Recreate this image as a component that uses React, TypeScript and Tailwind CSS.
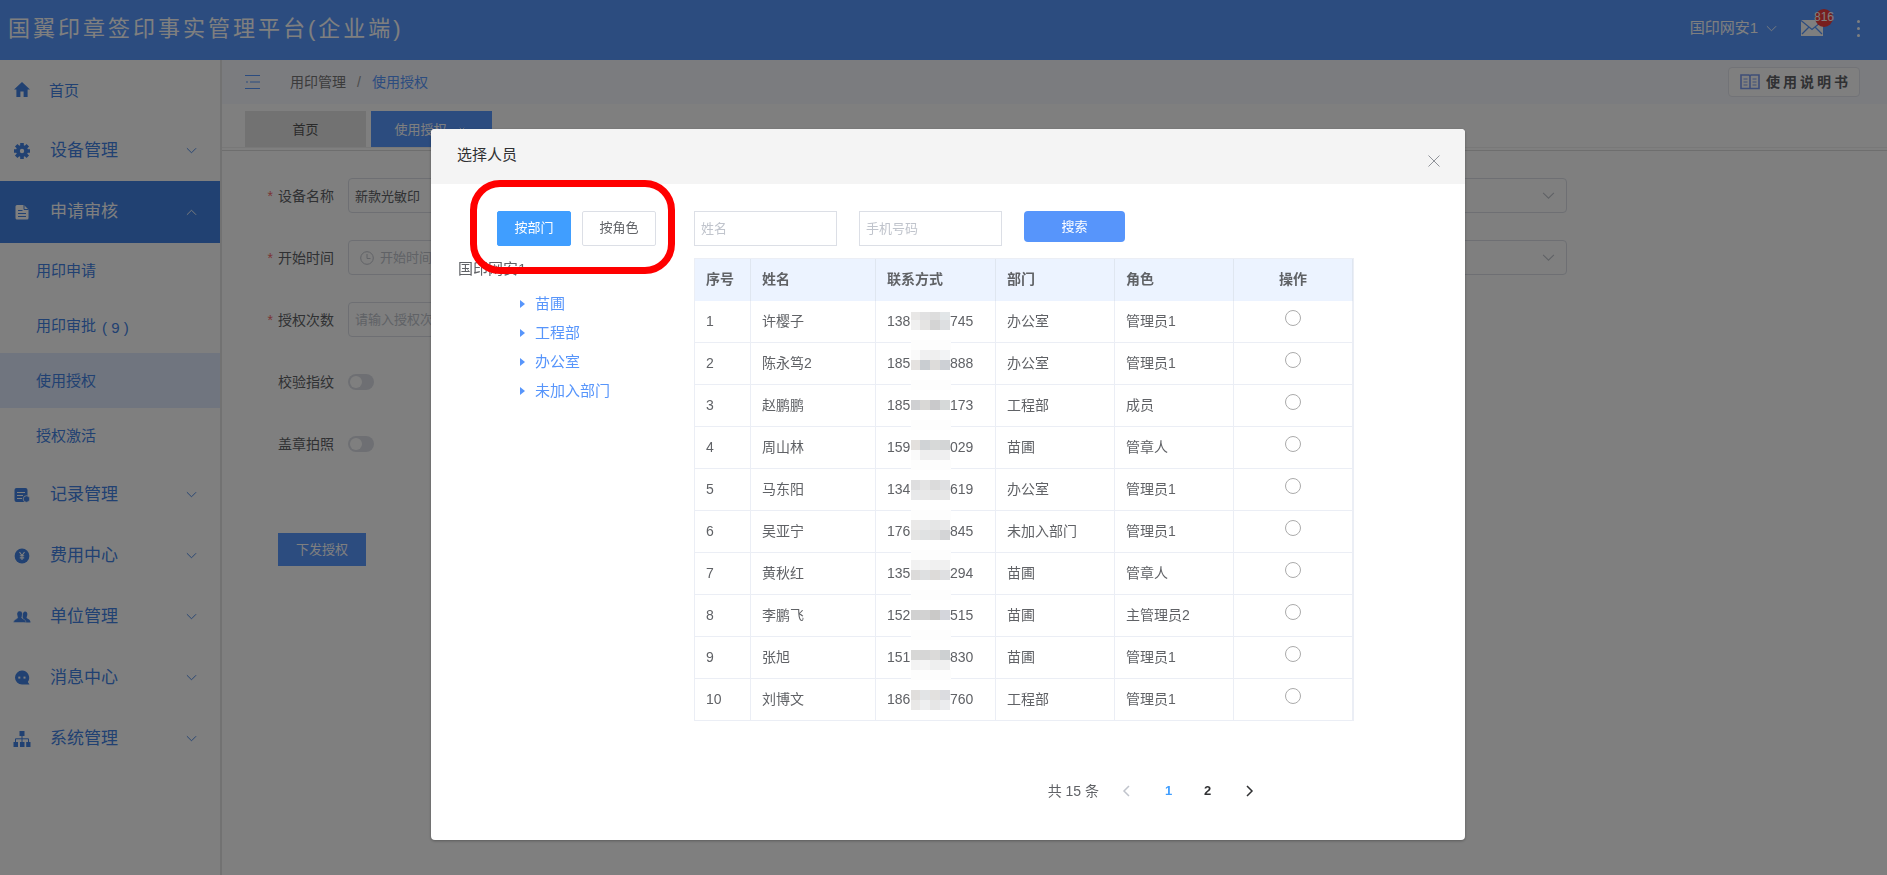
import { useState } from 'react'
import type { ReactNode } from 'react'

const ICONS: Record<string, ReactNode> = {
  home: <path d="M9 1 17 8.6H14.6V16H10.6V10.6H7.4V16H3.4V8.6H1Z" />,
  gear: (
    <g>
      <g stroke="currentColor" strokeWidth="3.6">
        <path d="M9 1V17M1 9H17M3.2 3.2 14.8 14.8M14.8 3.2 3.2 14.8" />
      </g>
      <circle cx="9" cy="9" r="6" />
      <circle cx="9" cy="9" r="2.2" fill="#fff" />
    </g>
  ),
  doc: (
    <g>
      <path d="M4 2H11L15.5 6.5V15A1.5 1.5 0 0 1 14 16.500H4A1.500 1.500 0 0 1 2.500 15V3.500A1.500 1.500 0 0 1 4 2Z" />
      <path d="M11 2V6.500H15.500M5 7.500H9.500M5 10.500H13M5 13.500H13" stroke="#4282e4" fill="none" />
    </g>
  ),
  record: (
    <g>
      <rect x="1.500" y="2" width="13" height="14" rx="2" />
      <path d="M4 6.500H12M4 9.500H10M4 12.500H9" stroke="#fff" strokeWidth="1.200" />
      <circle cx="13.500" cy="13" r="3.300" stroke="#fff" strokeWidth="0.800" />
    </g>
  ),
  fee: (
    <g>
      <circle cx="9" cy="9" r="7.400" />
      <path d="M6.500 5 9 8.500 11.500 5M9 8.500V13M6.800 8.800H11.200M6.800 10.900H11.200" stroke="#fff" fill="none" strokeWidth="1.100" />
    </g>
  ),
  people: (
    <g>
      <path d="M12 3.500C13.800 3.500 14.600 5 14.300 6.800 14.100 8.200 13.600 8.900 13.600 9.800 14.200 11 17.500 11.200 17.500 14.500H11.500L9.500 9C9.900 7.500 9.700 3.500 12 3.500Z" />
      <path
        d="M6.700 3C9 3 9.700 4.800 9.400 6.800 9.200 8.200 8.700 8.900 8.700 9.800 9.400 11.200 13 11.200 13 14.500H.5C.5 11.200 4.100 11.200 4.700 9.800 4.700 8.900 4.200 8.200 4 6.800 3.700 4.800 4.500 3 6.700 3Z"
        stroke="#fff"
        strokeWidth="0.500"
      />
    </g>
  ),
  chat: (
    <g>
      <path d="M9 1.600A7.200 7.200 0 0 1 14.800 13L16.500 15.600H9A7 7 0 0 1 9 1.600Z" />
      <rect x="5.300" y="7.600" width="2" height="2" fill="#fff" />
      <rect x="10.500" y="7.600" width="2" height="2" fill="#fff" />
    </g>
  ),
  tree: (
    <g>
      <path d="M6.500 1H11.500V6H6.500ZM.5 12H5V17H.5ZM7 12H11.500V17H7ZM13.200 12H17.500V17H13.200Z" />
      <path d="M9 6V12M2.500 12V8.800H15.500V12" stroke="currentColor" fill="none" />
    </g>
  ),
}

const SUB_MENU = [
  { label: '用印申请' },
  { label: '用印审批', count: '( 9 )' },
  { label: '使用授权', active: true },
  { label: '授权激活' },
]

const MENU_BOTTOM = [
  { icon: 'record', label: '记录管理' },
  { icon: 'fee', label: '费用中心' },
  { icon: 'people', label: '单位管理' },
  { icon: 'chat', label: '消息中心' },
  { icon: 'tree', label: '系统管理' },
]

const DEPARTMENTS = ['苗圃', '工程部', '办公室', '未加入部门']

const PEOPLE = [
  { name: '许樱子', phone: ['138', '745'], dept: '办公室', role: '管理员1' },
  { name: '陈永笃2', phone: ['185', '888'], dept: '办公室', role: '管理员1' },
  { name: '赵鹏鹏', phone: ['185', '173'], dept: '工程部', role: '成员' },
  { name: '周山林', phone: ['159', '029'], dept: '苗圃', role: '管章人' },
  { name: '马东阳', phone: ['134', '619'], dept: '办公室', role: '管理员1' },
  { name: '吴亚宁', phone: ['176', '845'], dept: '未加入部门', role: '管理员1' },
  { name: '黄秋红', phone: ['135', '294'], dept: '苗圃', role: '管章人' },
  { name: '李鹏飞', phone: ['152', '515'], dept: '苗圃', role: '主管理员2' },
  { name: '张旭', phone: ['151', '830'], dept: '苗圃', role: '管理员1' },
  { name: '刘博文', phone: ['186', '760'], dept: '工程部', role: '管理员1' },
]

// y of each strip followed by its four cell colours
const MASK: [number, string, string, string, string][] = [
  [12, '#e8e7e6', '#e1e1e2', '#dddddd', '#e2e6e8'],
  [20, '#f0f0f0', '#e5e4e3', '#d4d4d4', '#dddfe1'],
  [50, '#fafafa', '#f0f0f1', '#efefef', '#f2f3f5'],
  [60, '#e5e2e0', '#c9cdd1', '#dddcda', '#cdd0d5'],
  [100, '#cfd0d2', '#d9d8d6', '#c9c9cb', '#d6d9d9'],
  [140, '#e3e0dd', '#d0d3d6', '#d7d9d8', '#d3d5d6'],
  [150, '#fafafa', '#eeeeee', '#eeeeef', '#efeff0'],
  [180, '#dededf', '#e4e4e4', '#dbdbdb', '#dfe0e2'],
  [190, '#e8e9ea', '#e8e8e8', '#e6e6e6', '#e7e7e7'],
  [220, '#eae9e8', '#e8e9ea', '#e5e6e6', '#e8e8e9'],
  [230, '#e4e4e3', '#e0e2e3', '#e0e0e0', '#d3d4d6'],
  [260, '#f1f1f1', '#f3f3f3', '#f0f0f0', '#f0f0f0'],
  [270, '#dcdbda', '#dee0e1', '#dddbd9', '#dfe0e2'],
  [310, '#d1d1d1', '#d2d2d2', '#cac9c8', '#d4d6dc'],
  [350, '#d7d7d6', '#d6d6d6', '#dbdad9', '#cdd0d2'],
  [360, '#f3f3f3', '#f5f5f5', '#eeefef', '#f0f0f0'],
  [390, '#e0dedc', '#e2e4e6', '#e3e1df', '#dbdce0'],
  [400, '#e9e8e7', '#eeeff0', '#e6e6e6', '#ebecee'],
]
const MASK_GAPS = [40, 80, 120, 160, 210, 250, 290, 330, 370]

function MenuIcon({ name }: { name: string }) {
  return (
    <svg viewBox="0 0 18 18" className="size-[18px] shrink-0" fill="currentColor">
      {ICONS[name]}
    </svg>
  )
}

function Chevron({ className, up }: { className: string; up?: boolean }) {
  return (
    <svg viewBox="0 0 12 12" className={className} fill="none" stroke="currentColor">
      <path d={up ? 'M1 8.500 6 3.500 11 8.500' : 'M1 3.500 6 8.500 11 3.500'} />
    </svg>
  )
}

function MenuItem({ icon, label }: { icon: string; label: string }) {
  return (
    <a href="#" className="flex h-[61px] items-center pr-[23px] pl-[13px]">
      <MenuIcon name={icon} />
      <span className="ml-[19px] flex-1 text-[17px]">{label}</span>
      <Chevron className="size-[11px]" />
    </a>
  )
}

function Header() {
  return (
    <header className="flex h-[60px] items-center bg-[#5898ff] pr-[26px] pb-1 pl-2 text-white">
      <h1 className="flex-1 text-[22px] tracking-[3px]">国翼印章签印事实管理平台(企业端)</h1>
      <button className="flex items-center gap-2 text-[15px]">
        国印网安1
        <Chevron className="size-[11px]" />
      </button>
      <button className="relative ml-6" aria-label="消息">
        <svg viewBox="0 0 22 16" className="h-4 w-[22px]">
          <path d="M0 0H22V16H0Z" fill="#fff" />
          <path d="M0 .5 11 9.500 22 .5M1 14 8 7M21 14 14 7" fill="none" stroke="#5898ff" strokeWidth="1.300" />
        </svg>
        <span className="absolute -top-[11px] left-[14px] flex size-[18px] items-center justify-center rounded-full bg-[#f03c3c] pb-0.5 text-xs font-medium">
          816
        </span>
      </button>
      <button className="ml-[33px] flex flex-col gap-1 px-px" aria-label="更多">
        <span className="size-[3px] rounded-full bg-white" />
        <span className="size-[3px] rounded-full bg-white" />
        <span className="size-[3px] rounded-full bg-white" />
      </button>
    </header>
  )
}

function Sidebar() {
  return (
    <nav className="w-[220px] shrink-0 text-[#4282e4]">
      <a href="#" className="flex h-[60px] items-center pl-[13px]">
        <MenuIcon name="home" />
        <span className="ml-[18px] pt-0.5 text-[15px]">首页</span>
      </a>
      <MenuItem icon="gear" label="设备管理" />
      <a href="#" className="flex h-[62px] items-center bg-[#4282e4] pr-[23px] pl-[13px] text-white">
        <MenuIcon name="doc" />
        <span className="ml-[19px] flex-1 text-[17px]">申请审核</span>
        <Chevron className="size-[11px]" up />
      </a>
      {SUB_MENU.map((item) => (
        <a
          key={item.label}
          href="#"
          className={`flex h-[55px] items-center gap-1 pt-0.5 pl-9 text-[15px] ${item.active ? 'bg-[#e0eafe]' : ''}`}
        >
          {item.label}
          {item.count && <span className="pt-1 pl-0.5">{item.count}</span>}
        </a>
      ))}
      <div className="pt-px">
        {MENU_BOTTOM.map((item) => (
          <MenuItem key={item.icon} icon={item.icon} label={item.label} />
        ))}
      </div>
    </nav>
  )
}

function FormLabel({ htmlFor, text, required }: { htmlFor: string; text: string; required?: boolean }) {
  return (
    <label htmlFor={htmlFor} className="w-[112px] shrink-0 text-right text-sm text-[#606266]">
      {required && <span className="mr-[5px] text-[#f56c6c]">*</span>}
      {text}
    </label>
  )
}

function Toggle({ id, text }: { id: string; text: string }) {
  return (
    <div className="flex h-[35px] items-center gap-[14px]">
      <FormLabel htmlFor={id} text={text} />
      <span className="relative flex h-4 w-[26px]">
        <input id={id} type="checkbox" className="h-4 w-[26px] appearance-none rounded-full bg-[#dcdfe6]" />
        <span className="pointer-events-none absolute top-0.5 left-0.5 size-3 rounded-full bg-white" />
      </span>
    </div>
  )
}

function SelectBox({ label, value }: { label: string; value: string }) {
  return (
    <div className="relative min-w-0 flex-1">
      <select
        aria-label={label}
        className="block h-[35px] w-full appearance-none rounded border border-[#dcdfe6] px-1.5 text-[13px] text-[#606266]"
      >
        <option>{value}</option>
      </select>
      <Chevron className="pointer-events-none absolute top-[11px] right-3 size-[13px] text-[#c0c4cc]" />
    </div>
  )
}

function AuthForm() {
  return (
    <form className="flex w-[1345px] flex-col items-start gap-[27px] pt-[27px]">
      <div className="flex w-full items-center gap-[14px]">
        <FormLabel htmlFor="device" text="设备名称" required />
        <input
          id="device"
          defaultValue="新款光敏印"
          className="h-[35px] min-w-0 flex-1 rounded border border-[#dcdfe6] px-1.5 text-[13px] text-[#606266]"
        />
        <div className="w-28" />
        <SelectBox label="使用人员" value="" />
      </div>
      <div className="flex w-full items-center gap-[14px]">
        <FormLabel htmlFor="start" text="开始时间" required />
        <div className="flex h-[35px] min-w-0 flex-1 items-center rounded border border-[#dcdfe6] pl-[11px] text-[#c0c4cc]">
          <svg viewBox="0 0 14 14" className="size-[14px]" fill="none" stroke="currentColor">
            <circle cx="7" cy="7" r="6.300" />
            <path d="M7 3V7.500H10.500" />
          </svg>
          <input
            id="start"
            placeholder="开始时间"
            className="ml-1.5 min-w-0 flex-1 text-[13px] outline-none placeholder:text-[#c0c4cc]"
          />
        </div>
        <div className="w-28" />
        <SelectBox label="结束时间" value="" />
      </div>
      <div className="flex w-full items-center gap-[14px]">
        <FormLabel htmlFor="times" text="授权次数" required />
        <input
          id="times"
          placeholder="请输入授权次数"
          className="h-[35px] min-w-0 flex-1 rounded border border-[#dcdfe6] px-1.5 text-[13px] placeholder:text-[#c0c4cc]"
        />
        <div className="w-28" />
        <div className="flex-1" />
      </div>
      <Toggle id="fingerprint" text="校验指纹" />
      <Toggle id="photo" text="盖章拍照" />
      <button type="button" className="mt-[45px] ml-14 h-[33px] w-[88px] bg-[#5898ff] text-[13px] text-white">
        下发授权
      </button>
    </form>
  )
}

function Main() {
  return (
    <main className="min-w-0 flex-1 border-l-2 border-[#e4e4e4]">
      <div className="flex h-11 items-center bg-[#f6f8ff] pr-[27px] pl-[23px]">
        <button aria-label="收起菜单" className="text-[#5898ff]">
          <svg viewBox="0 0 15 14" className="h-[14px] w-[15px]" fill="none" stroke="currentColor">
            <path d="M0 .5H15M5 7H15M0 13.500H15M1 7H3" strokeWidth="1.200" />
          </svg>
        </button>
        <div className="ml-[30px] flex flex-1 items-center gap-[11px] text-sm">
          <a href="#" className="text-[#777]">用印管理</a>
          <span className="text-[#999]">/</span>
          <a href="#" className="text-[#5898ff]">使用授权</a>
        </div>
        <button className="flex h-[30px] items-center gap-1.5 rounded border border-[#e4e6ee] bg-white pr-2 pl-[11px] text-sm font-bold tracking-[3px] text-[#606266]">
          <svg viewBox="0 0 20 16" className="h-4 w-5" fill="none" stroke="#7c9cf0">
            <path d="M1 1H9L10 2 11 1H19V14.500H1ZM10 2V14.500" strokeWidth="1.600" />
            <path d="M3.500 5H7.500M3.500 8H7.500M3.500 11H7.500M12.500 5H16.500M12.500 8H16.500M12.500 11H16.500" />
          </svg>
          使用说明书
        </button>
      </div>
      <div className="flex h-11 items-end gap-[5px] border-b border-[#f0f0f0] pl-[23px]">
        <a href="#" className="flex h-9 w-[121px] items-center justify-center bg-[#e4e4e4] pt-0.5 text-[13px] text-[#555]">
          首页
        </a>
        <a href="#" className="flex h-9 w-[121px] items-center justify-center gap-3 bg-[#5898ff] pt-0.5 pr-1 text-[13px] text-white">
          使用授权
          <svg viewBox="0 0 8 8" className="size-1.5" fill="none" stroke="currentColor">
            <path d="M1 1 7 7M7 1 1 7" />
          </svg>
        </a>
      </div>
      <div className="mt-0.5 border-t border-[#dcdcdc]">
        <AuthForm />
      </div>
    </main>
  )
}

function PhoneMask() {
  const xs = [0, 9, 19, 29]
  return (
    <svg
      viewBox="0 0 40 420"
      className="pointer-events-none absolute top-[41px] left-[216px] h-[420px] w-10"
      shapeRendering="crispEdges"
    >
      {MASK_GAPS.map((y) => (
        <rect key={y} x="0" y={y} width="40" height="10" fill="#fdfdfd" />
      ))}
      {MASK.map(([y, ...colors]) =>
        colors.map((color, i) => (
          <rect key={`${y}-${i}`} x={xs[i]} y={y} width={i ? 10 : 9} height={y === 12 ? 8 : 10} fill={color} />
        )),
      )}
    </svg>
  )
}

function PeopleTable() {
  const [picked, setPicked] = useState('')

  return (
    <div className="relative mt-3 w-[660px] border border-[#ebeef5]">
      <table className="w-full table-fixed border-separate border-spacing-0 text-left text-sm text-[#606266]">
        <colgroup>
          <col className="w-14" />
          <col className="w-[125px]" />
          <col className="w-[120px]" />
          <col className="w-[119px]" />
          <col className="w-[119px]" />
          <col />
        </colgroup>
        <thead>
          <tr className="h-[42px]">
            {['序号', '姓名', '联系方式', '部门', '角色', '操作'].map((title) => (
              <th
                key={title}
                className={`border-r border-[#dfe6f0] bg-[#ecf3ff] px-[11px] pt-0 pb-0.5 font-bold ${title === '操作' ? 'text-center' : ''}`}
              >
                {title}
              </th>
            ))}
          </tr>
        </thead>
        <tbody>
          {PEOPLE.map((person, i) => (
            <tr
              key={person.name}
              className="h-[42px] *:border-r *:border-b *:border-[#ebeef5] *:px-[11px] *:pt-0 *:pb-0.5 last:h-[41px] last:*:border-b-0"
            >
              <td>{i + 1}</td>
              <td>{person.name}</td>
              <td>
                <span className="flex gap-[39px]">
                  <span className="w-6">{person.phone[0]}</span>
                  <span>{person.phone[1]}</span>
                </span>
              </td>
              <td>{person.dept}</td>
              <td>{person.role}</td>
              <td className="text-center">
                <input
                  type="radio"
                  name="person"
                  aria-label={person.name}
                  checked={picked === person.name}
                  onChange={() => setPicked(person.name)}
                  className="mb-1.5 size-4 appearance-none rounded-full border border-[#aaa] align-middle checked:border-[5px] checked:border-[#409eff]"
                />
              </td>
            </tr>
          ))}
        </tbody>
      </table>
      <PhoneMask />
    </div>
  )
}

function PersonDialog() {
  const [mode, setMode] = useState('按部门')

  return (
    <div role="dialog" aria-label="选择人员" className="relative w-[1034px] rounded-sm bg-white shadow-[0_1px_3px_rgba(0,0,0,0.3)]">
      <div className="flex h-[55px] items-center justify-between rounded-t-sm bg-[#f4f4f4] pr-6 pl-[26px]">
        <h2 className="pb-0.5 text-[15px] text-[#303133]">选择人员</h2>
        <button aria-label="关闭" className="pt-2 text-[#909399]">
          <svg viewBox="0 0 14 14" className="size-[14px]" fill="none" stroke="currentColor">
            <path d="M1.500 1.500 12.500 12.500M12.500 1.500 1.500 12.500" />
          </svg>
        </button>
      </div>

      <div className="flex pt-[27px] pb-9 pl-[26px]">
        <div className="w-[237px] shrink-0 text-[15px]">
          <div className="flex gap-[11px] pl-10 text-[13px]">
            {['按部门', '按角色'].map((item) => (
              <button
                key={item}
                onClick={() => setMode(item)}
                className={`h-[35px] w-[74px] rounded-xs border pb-0.5 ${
                  mode === item ? 'border-[#409eff] bg-[#409eff] text-white' : 'border-[#dcdfe6] text-[#606266]'
                }`}
              >
                {item}
              </button>
            ))}
          </div>
          <p className="mt-3 pl-px text-[#606266]">国印网安1</p>
          <ul className="mt-[9px] pl-[63px] text-[#5795fb]">
            {DEPARTMENTS.map((dept) => (
              <li key={dept} className="flex h-[29px] items-center gap-2.5">
                <svg viewBox="0 0 5 8" className="h-2 w-[5px]" fill="currentColor">
                  <path d="M0 0 5 4 0 8Z" />
                </svg>
                {dept}
              </li>
            ))}
          </ul>
        </div>

        <div>
          <div className="flex items-start gap-[22px] text-[13px]">
            <input
              aria-label="姓名"
              placeholder="姓名"
              className="h-[35px] w-[143px] border border-[#dcdfe6] px-1.5 placeholder:text-[#c0c4cc]"
            />
            <input
              aria-label="手机号码"
              placeholder="手机号码"
              className="h-[35px] w-[143px] border border-[#dcdfe6] px-1.5 placeholder:text-[#c0c4cc]"
            />
            <button className="h-[31px] w-[101px] rounded bg-[#5795fb] text-white">搜索</button>
          </div>
          <PeopleTable />
          <div className="mt-[57px] flex items-center justify-end pr-[100px] text-sm text-[#606266]">
            <span>共 15 条</span>
            <button aria-label="上一页" className="ml-[22px] text-[#c0c4cc]">
              <svg viewBox="0 0 10 12" className="h-3 w-2.5" fill="none" stroke="currentColor" strokeWidth="1.500">
                <path d="M8 1 3 6 8 11" />
              </svg>
            </button>
            <button className="ml-[18px] h-[26px] w-[39px] text-[13px] font-bold text-[#409eff]">1</button>
            <button className="h-[26px] w-[39px] text-[13px] font-bold text-[#303133]">2</button>
            <button aria-label="下一页" className="ml-[17px] text-[#303133]">
              <svg viewBox="0 0 10 12" className="h-3 w-2.5" fill="none" stroke="currentColor" strokeWidth="1.500">
                <path d="M3 1 8 6 3 11" />
              </svg>
            </button>
          </div>
        </div>
      </div>

      {/* highlight around the mode switch */}
      <div className="pointer-events-none absolute top-[51px] left-[39px] h-[94px] w-[205px] rounded-[30px] border-[7px] border-[#ff0000]" />
    </div>
  )
}

export default function App() {
  return (
    <div className="flex min-h-screen flex-col bg-white font-['Liberation_Sans','Noto_Sans_CJK_SC',sans-serif]">
      <Header />
      <div className="flex flex-1">
        <Sidebar />
        <Main />
      </div>
      <div className="fixed inset-0 flex items-start justify-center bg-black/50 pt-[129px] pl-[9px]">
        <PersonDialog />
      </div>
    </div>
  )
}
